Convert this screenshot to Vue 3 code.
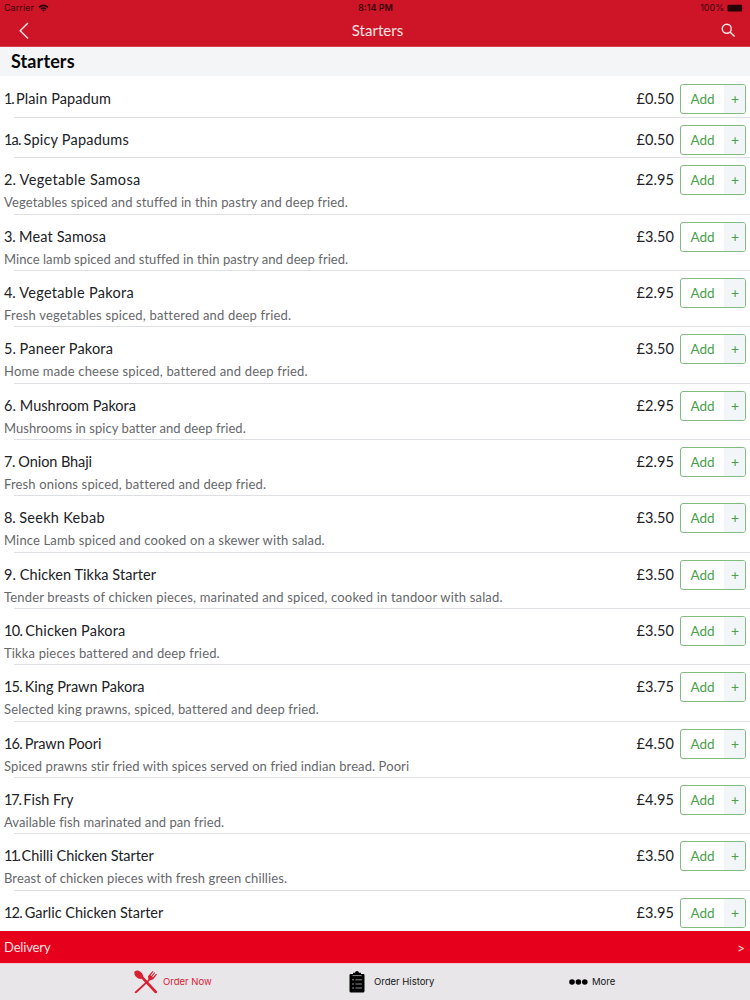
<script setup>
// number, name, description, price, then tracking (px) for number, name and description
const items = [
  ['1.', 'Plain Papadum', '', '0.50', -1.2, 0.1, 0],
  ['1a.', 'Spicy Papadums', '', '0.50', -0.8, 0.2, 0],
  ['2.', 'Vegetable Samosa', 'Vegetables spiced and stuffed in thin pastry and deep fried.', '2.95', 0, 0.36, 0.12],
  ['3.', 'Meat Samosa', 'Mince lamb spiced and stuffed in thin pastry and deep fried.', '3.50', -0.15, 0.13, 0.06],
  ['4.', 'Vegetable Pakora', 'Fresh vegetables spiced, battered and deep fried.', '2.95', -0.1, 0.3, 0.19],
  ['5.', 'Paneer Pakora', 'Home made cheese spiced, battered and deep fried.', '3.50', 0, 0.2, 0.17],
  ['6.', 'Mushroom Pakora', 'Mushrooms in spicy batter and deep fried.', '2.95', 0.1, 0, 0.05],
  ['7.', 'Onion Bhaji', 'Fresh onions spiced, battered and deep fried.', '2.95', -0.4, -0.08, 0.15],
  ['8.', 'Seekh Kebab', 'Mince Lamb spiced and cooked on a skewer with salad.', '3.50', -0.1, 0.28, 0.15],
  ['9.', 'Chicken Tikka Starter', 'Tender breasts of chicken pieces, marinated and spiced, cooked in tandoor with salad.', '3.50', 0.1, 0.05, 0.17],
  ['10.', 'Chicken Pakora', 'Tikka pieces battered and deep fried.', '3.50', -0.7, 0.17, 0.15],
  ['15.', 'King Prawn Pakora', 'Selected king prawns, spiced, battered and deep fried.', '3.75', -0.8, 0, 0.15],
  ['16.', 'Prawn Poori', 'Spiced prawns stir fried with spices served on fried indian bread. Poori', '4.50', -0.8, -0.1, 0.09],
  ['17.', 'Fish Fry', 'Available fish marinated and pan fried.', '4.95', -1.15, 0, 0.07],
  ['11.', 'Chilli Chicken Starter', 'Breast of chicken pieces with fresh green chillies.', '3.50', -1.6, -0.05, 0.11],
  ['12.', 'Garlic Chicken Starter', '', '3.95', -0.8, 0, 0],
].map(([no, name, description, price, noGap, nameGap, textGap]) => ({
  no, name, description, price,
  noStyle: { letterSpacing: noGap + 'px' },
  nameStyle: { letterSpacing: nameGap + 'px' },
  textStyle: { letterSpacing: textGap + 'px' },
}))
</script>

<template>
  <div class="screen">
    <header>
      <div class="status">
        <span class="carrier">Carrier
          <svg width="11" height="8" viewBox="0 0 11 8"><path d="M.5 2.7Q5.5-1.5 10.5 2.7L9.4 3.9Q5.5.7 1.6 3.9ZM2.3 4.6Q5.5 2 8.7 4.6L7.6 5.7Q5.5 4.1 3.4 5.7ZM4 6.3Q5.5 5.2 7 6.3L5.5 7.8Z" /></svg>
        </span>
        <span class="clock">8:14 PM</span>
        <span class="battery">100%
          <svg width="17" height="8" viewBox="0 0 17 8"><rect x=".5" y=".8" width="14.5" height="6.6" rx="1.2" /><path d="M15.6 2.7Q17 4 15.6 5.3Z" /></svg>
        </span>
      </div>
      <nav>
        <svg class="back" width="10" height="18" viewBox="0 0 10 18"><path d="M9 1 1.2 8.8 9 16.6" /></svg>
        <h1>Starters</h1>
        <svg class="search" width="15" height="15" viewBox="0 0 15 15"><circle cx="5.8" cy="5.7" r="4.5" /><path d="m9 9 4.6 4.5" /></svg>
      </nav>
    </header>
    <h2>Starters</h2>
    <main>
      <article v-for="item in items" :key="item.name" :class="{ described: item.description }">
        <div class="line">
          <span class="name"><span :style="item.noStyle">{{ item.no + ' ' }}</span><span :style="item.nameStyle">{{ item.name }}</span></span>
          <span class="price">£{{ item.price }}</span>
          <button><span class="add">Add</span><span class="plus">+</span></button>
        </div>
        <p v-if="item.description" :style="item.textStyle">{{ item.description }}</p>
      </article>
    </main>
    <div class="delivery"><span>Delivery</span><span class="chevron">&gt;</span></div>
    <footer>
      <div class="tab order">
        <svg width="24" height="24" viewBox="0 0 24 24">
          <path d="M.8 1.2C3.6-.8 8.4 1.6 9.4 6.7L22.9 21.2Q23.4 22.6 22.3 23.2 21.3 23.6 20.4 22.4L7.6 8.8C3.4 9.6-1 4.6.8 1.2Z" />
          <path d="M1.2 21.4 14.4 9.6 14 6.2 18.6 1 19.4 1.6 16.6 5.4 17.2 5.9 20.4 2.2 21.2 2.8 18.2 6.6 18.8 7.2 22.2 3.8 23 4.6 19.2 9.3 15.8 10.4 2.8 22.8Q1.7 23.6.9 22.8.2 22.2 1.2 21.4Z" />
        </svg>
        <span>Order Now</span>
      </div>
      <div class="tab history">
        <svg width="16" height="22" viewBox="0 0 16 22">
          <path d="M1.5 3H4V1.7H6Q6.2 0 8 0T10 1.7H12V3H14.5Q15.5 3 15.5 4V20Q15.5 21.5 14 21.5H2Q.5 21.5.5 20V4Q.5 3 1.5 3Z" />
          <path class="marks" d="M3.5 4.6H12.5M3 8.8H5M6.5 8.8H13M3 13H5M6.5 13H13M3 17H5M6.5 17H13" />
        </svg>
        <span>Order History</span>
      </div>
      <div class="tab more">
        <svg width="19" height="6" viewBox="0 0 19 6"><circle cx="3" cy="3" r="2.8" /><circle cx="9.4" cy="3" r="2.8" /><circle cx="15.8" cy="3" r="2.8" /></svg>
        <span>More</span>
      </div>
    </footer>
  </div>
</template>

<style>
body { margin: 0; overflow: hidden; }
</style>

<style scoped>
* { box-sizing: border-box; }
.screen { width: 750px; height: 1000px; display: flex; flex-direction: column; background: #fff; color: #202126; font-family: Lato, sans-serif; overflow: hidden; }
header { height: 47px; flex: none; background: #ce1527; border-bottom: 1px solid #d6424e; }
.status { height: 15px; display: grid; grid-template-columns: 1fr 1fr 1fr; align-items: center; padding: 0 6px 0 4px; color: #39050b; font: 9px/15px Inter, sans-serif; }
.status svg { fill: #250307; }
.carrier, .battery { display: flex; align-items: center; gap: 4px; }
.carrier { letter-spacing: .05px; }
.battery { justify-content: flex-end; gap: 3px; }
.clock { text-align: center; font-weight: 600; padding-left: 3px; }
nav { height: 31px; display: grid; grid-template-columns: 1fr 1fr 1fr; align-items: center; padding: 0 14px 0 19px; }
nav svg { fill: none; stroke: #ffe8e8; stroke-width: 1.4; }
.search { justify-self: end; }
h1 { margin: -2px 0 0; text-align: center; font-size: 15px; font-weight: 400; letter-spacing: .05px; color: #ffe2e2; }
h2 { height: 29px; margin: 0; padding-left: 11px; flex: none; background: #f3f5f7; color: #08090b; font: 700 18px/29px Lato, sans-serif; letter-spacing: .1px; }
main { flex: 1; min-height: 0; padding-top: 1px; overflow: hidden; }
article { height: 40.7px; padding-top: 7px; background: linear-gradient(#dedfe2, #dedfe2) 14px 100% / 100% 1px no-repeat; }
article.described { height: 56.34px; }
article:last-child { background: none; }
.line { height: 30px; display: flex; align-items: center; padding: 0 4px; font-size: 14.5px; letter-spacing: .1px; }
.name { flex: 1; margin-top: -1px; white-space: pre; }
.price { margin: -1px 6px 0 0; }
button { width: 66px; height: 30px; display: flex; padding: 0; border: 1px solid #80bb80; border-radius: 3px; background: #fff; overflow: hidden; color: #4a9f4a; font: 14px/28px Lato, sans-serif; }
.add { width: 43px; font-size: 13.5px; }
.plus { flex: 1; padding-left: 1px; background: #f3f6f8; }
p { margin: 0; padding-left: 4px; color: #66676b; font-size: 13px; line-height: 15px; }
.delivery { height: 32px; flex: none; display: flex; justify-content: space-between; align-items: center; padding: 0 5px 0 4px; background: #e6001c; color: #ffe0e0; font-size: 13px; letter-spacing: -.15px; }
.chevron { font-size: 14px; }
footer { height: 37px; flex: none; display: grid; grid-template-columns: 240px 210px 1fr; background: #e8e6e8; border-top: 1px solid #f4c9cc; font: 9.5px/14px Inter, sans-serif; color: #151517; }
.tab { display: flex; align-items: center; }
.order { padding-left: 134px; gap: 5px; color: #dd203b; }
.order svg { fill: #d91f32; }
.history { padding-left: 109px; gap: 9px; }
.history .marks { fill: none; stroke: #999a9d; stroke-width: .9; }
.more { padding-left: 119px; gap: 4px; }
</style>
